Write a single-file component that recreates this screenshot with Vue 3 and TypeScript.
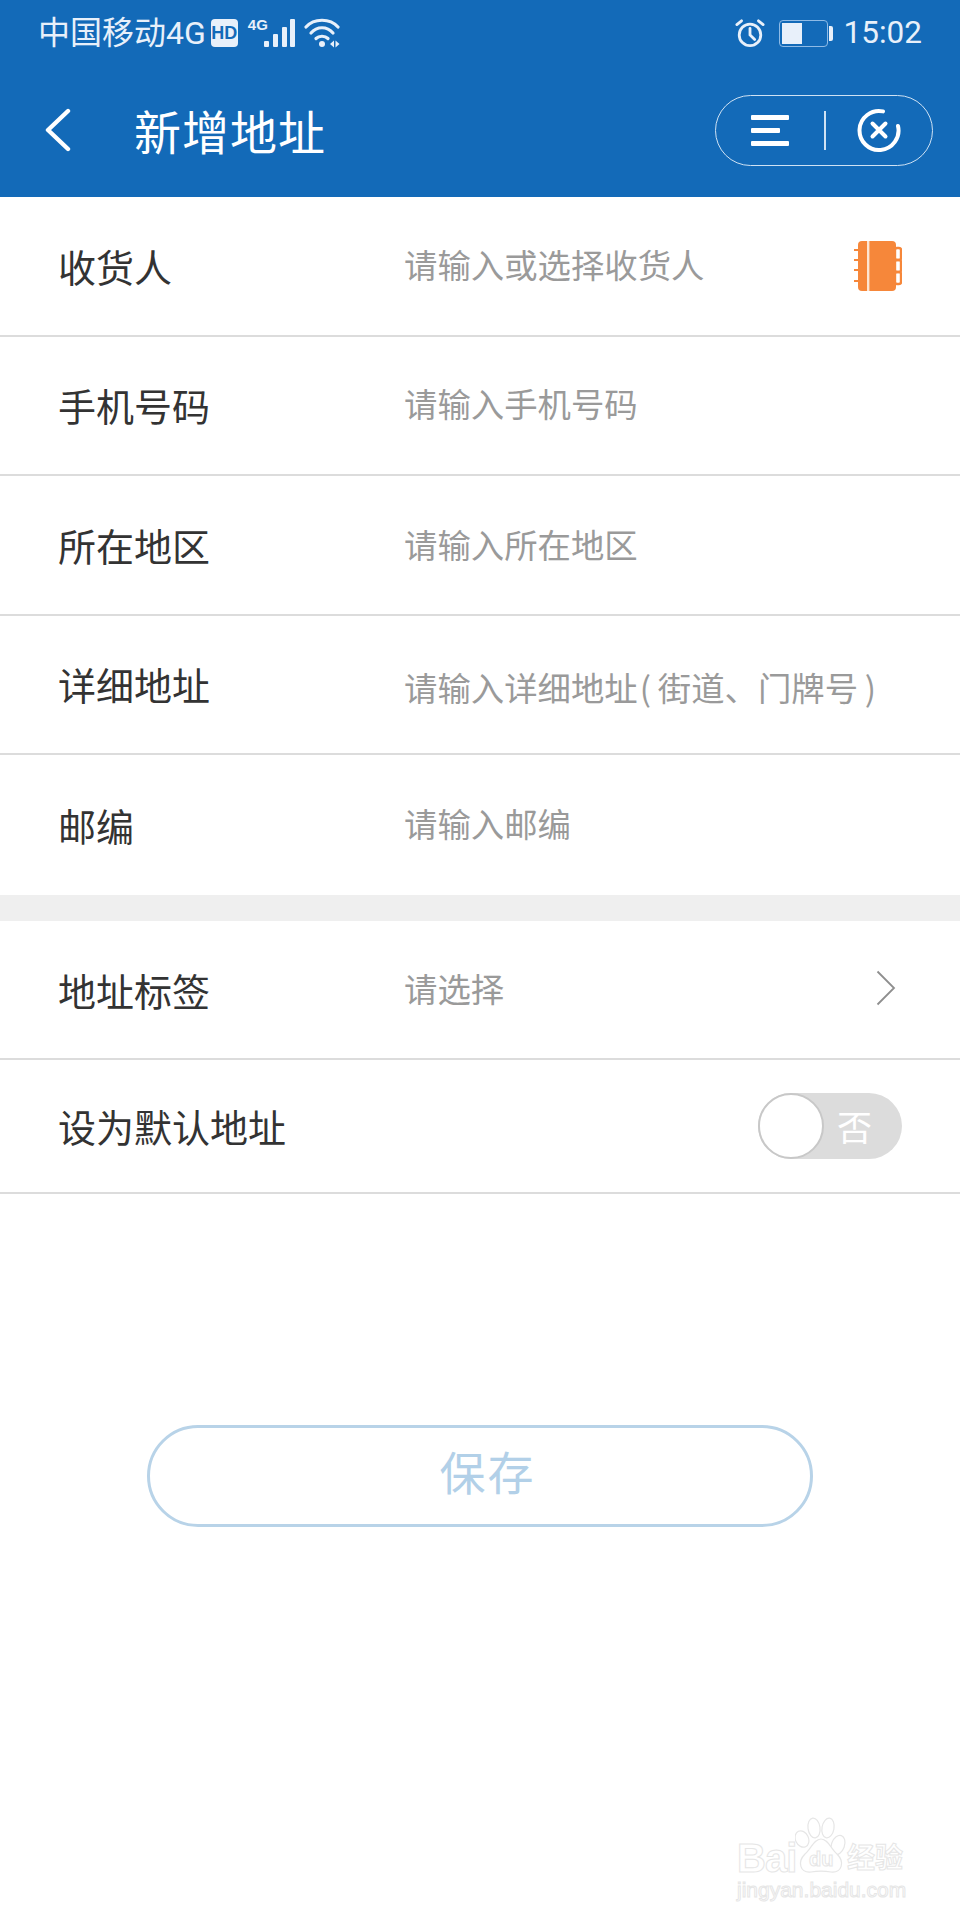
<script setup lang="ts">
interface Row { label: string; hint: string }
const group1: Row[] = [
  { label: '收货人', hint: '请输入或选择收货人' },
  { label: '手机号码', hint: '请输入手机号码' },
  { label: '所在地区', hint: '请输入所在地区' },
  { label: '详细地址', hint: '请输入详细地址\u200a(\u2009街道、门牌号\u2009)' },
  { label: '邮编', hint: '请输入邮编' },
]
</script>

<template>
  <div class="page">
    <header class="head">
      <div class="status">
        <div class="status-side">
          <span class="carrier">中国移动4G</span>
          <span class="hd">HD</span>
          <span class="sig">
            <span class="sig-4g">4G</span>
            <svg width="36" height="30" viewBox="0 0 36 30">
              <g fill="#e8f0fa">
                <rect x="4" y="23" width="5" height="6" rx="1" />
                <rect x="13" y="16" width="5" height="13" rx="1" />
                <rect x="22" y="9" width="5" height="20" rx="1" />
                <rect x="30" y="1" width="5" height="28" rx="1" />
              </g>
            </svg>
          </span>
          <svg class="wifi" width="36" height="30" viewBox="0 0 36 30" fill="none" stroke="#e8f0fa" stroke-width="3.2" stroke-linecap="round">
            <path d="M2 9C10 0 26 0 34 9" />
            <path d="M7 15C13 8 23 8 29 15" />
            <path d="M12 20.5C15 17.5 21 17.5 24 20.5" />
            <circle cx="18" cy="26" r="3" fill="#e8f0fa" stroke="none" />
            <path d="M26 26l4-3.5v7zM31.5 22.5l4 3.5-4 3.5z" fill="#e8f0fa" stroke="none" />
          </svg>
        </div>
        <div class="status-side">
          <svg class="alarm" width="30" height="30" viewBox="0 0 32 32" fill="none" stroke="#e8f0fa" stroke-width="3" stroke-linecap="round">
            <circle cx="16" cy="18" r="11.5" />
            <path d="M16 11v7l5 5" />
            <path d="M2 7l5-4M30 7l-5-4" />
          </svg>
          <span class="battery"><span class="level"></span></span>
          <span class="batt-tip"></span>
          <span class="time">15:02</span>
        </div>
      </div>
      <div class="nav">
        <svg class="back" width="28" height="44" viewBox="0 0 28 44" fill="none" stroke="#fff" stroke-width="4.4" stroke-linecap="round" stroke-linejoin="round">
          <path d="M24 3L4 22l20 19" />
        </svg>
        <h1 class="title">新增地址</h1>
        <div class="capsule">
          <svg width="40" height="32" viewBox="0 0 40 32" fill="#fff">
            <rect x="1" y="1" width="38" height="5" rx="1" />
            <rect x="1" y="14" width="29" height="5" rx="1" />
            <rect x="1" y="27" width="38" height="5" rx="1" />
          </svg>
          <span class="capsule-sep"></span>
          <svg width="44" height="44" viewBox="0 0 44 44" fill="none" stroke="#fff" stroke-width="4" stroke-linecap="round">
            <path d="M26 3.4A19.5 19.5 0 1 0 41 18" />
            <path d="M15.5 15.5l13 13M28.5 15.5l-13 13" />
          </svg>
        </div>
      </div>
    </header>

    <section class="group">
      <div v-for="(r, i) in group1" :key="r.label" class="row" :class="{ last: i === group1.length - 1 }">
        <span class="label">{{ r.label }}</span>
        <span class="hint" :class="{ low: i === 3, mid: i === 2 }">{{ r.hint }}</span>
        <svg v-if="i === 0" class="book" width="48" height="52" viewBox="0 0 48 52">
          <rect x="4" y="1" width="38" height="50" rx="4" fill="#f6873a" />
          <rect x="13" y="1" width="2.4" height="50" fill="#fde6d4" />
          <g fill="none" stroke="#f6873a" stroke-width="2.4">
            <rect x="41" y="8" width="6" height="12" rx="2" />
            <rect x="41" y="20" width="6" height="12" rx="2" />
            <rect x="41" y="32" width="6" height="12" rx="2" />
          </g>
          <g stroke="#f6873a" stroke-width="2">
            <path d="M0 10h4M0 20h4M0 30h4M0 41h4" />
          </g>
        </svg>
      </div>
    </section>

    <div class="band"></div>

    <section class="group">
      <div class="row tag-row">
        <span class="label">地址标签</span>
        <span class="hint">请选择</span>
        <svg class="chev" width="20" height="36" viewBox="0 0 20 36" fill="none" stroke="#8e8e8e" stroke-width="1.8">
          <path d="M1.5 1.5L18 18 1.5 34.5" />
        </svg>
      </div>
      <div class="row default-row">
        <span class="label">设为默认地址</span>
        <div class="toggle">
          <span class="knob"></span>
          <span class="toggle-text">否</span>
        </div>
      </div>
    </section>

    <div class="save-wrap">
      <button class="save" type="button">保存</button>
    </div>

    <div class="mark">
      <div class="mark-top">
        <span class="mark-bai">Bai</span>
        <span class="paw">
          <svg width="52" height="61" viewBox="0 0 52 61" fill="#fff" stroke="#e6e6e6" stroke-width="1.2">
            <ellipse cx="7" cy="22" rx="6.5" ry="8.5" transform="rotate(-25 7 22)" />
            <ellipse cx="19" cy="11" rx="6" ry="10" transform="rotate(-8 19 11)" />
            <ellipse cx="33" cy="11" rx="6" ry="10" transform="rotate(10 33 11)" />
            <ellipse cx="43" cy="28" rx="6.5" ry="10" transform="rotate(20 43 28)" />
            <path d="M26 22C33 22 36 32 42 37C50 45 47 56 36 55C30 54 22 54 16 55C5 56 2 45 10 37C16 32 19 22 26 22Z" />
          </svg>
          <span class="mark-du">du</span>
        </span>
        <span class="mark-cn">经验</span>
      </div>
      <div class="mark-url">jingyan.baidu.com</div>
    </div>
  </div>
</template>

<style>
html, body { margin: 0; background: #fff; }
</style>

<style scoped>
.page {
  position: relative;
  width: 960px;
  height: 1920px;
  background: #fff;
  overflow: hidden;
  font-family: "Noto Sans CJK SC", "Noto Sans", sans-serif;
}
.head { background: #136ab8; height: 197px; }
.status {
  display: flex;
  justify-content: space-between;
  align-items: center;
  height: 66px;
  padding: 0 38px 0 38px;
  color: #e8f0fa;
}
.status-side { display: flex; align-items: center; }
.carrier { font-size: 32px; line-height: 36px; font-family: Roboto, "Noto Sans CJK SC", sans-serif; }
.hd {
  margin-left: 5px;
  width: 27px;
  height: 28px;
  background: #e8f0fa;
  color: #136ab8;
  border-radius: 4px;
  font: 700 18px/28px "Liberation Sans", sans-serif;
  text-align: center;
}
.sig { position: relative; display: flex; margin-left: 10px; width: 48px; justify-content: flex-end; }
.sig-4g {
  position: absolute;
  left: 0;
  top: -2px;
  font: 700 15px/17px "Liberation Sans", sans-serif;
}
.wifi { margin-left: 8px; }
.alarm { margin-right: 14px; }
.battery {
  display: block;
  width: 43px;
  height: 21px;
  border: 1.5px solid #8fbbe6;
  border-radius: 4px;
  padding: 2px;
  box-sizing: content-box;
}
.level { display: block; width: 20px; height: 100%; background: #e8f0fa; }
.batt-tip { width: 4px; height: 15px; background: #e8f0fa; border-radius: 0 2px 2px 0; margin-left: 1px; }
.time { margin-left: 11px; font: 400 31.5px/36px Roboto, sans-serif; }
.nav {
  display: flex;
  align-items: center;
  height: 131px;
  padding: 0 27px 3px 44px;
  box-sizing: border-box;
}
.back { flex: none; }
.title {
  margin: 0 0 0 62px;
  flex: 1;
  font-size: 47px;
  font-weight: 400;
  line-height: 60px;
  letter-spacing: 1px;
  color: #fff;
}
.capsule {
  display: flex;
  align-items: center;
  width: 218px;
  height: 71px;
  box-sizing: border-box;
  border: 1.5px solid #cfe2f4;
  border-radius: 36px;
  padding-left: 34px;
}
.capsule-sep { width: 1.5px; height: 39px; background: #cfe2f4; margin: 0 31px 0 34px; }
.row {
  display: flex;
  align-items: center;
  height: 139.5px;
  padding: 0 58px;
  border-bottom: 2px solid #dcdcdc;
  box-sizing: border-box;
  position: relative;
}
.row.last { border-bottom: 0; height: 140px; }
.tag-row { height: 139px; }
.default-row { height: 134px; }
.label { width: 346px; flex: none; font-size: 38px; color: #333; line-height: 50px; }
.default-row .label { width: auto; flex: 1; }
.hint { flex: 1; font-size: 33.4px; color: #9a9a9a; line-height: 44px; white-space: nowrap; margin-top: -4px; }
.hint.low { margin-top: 6px; }
.hint.mid { margin-top: -2px; }
.book { flex: none; }
.chev { flex: none; margin: 0 6px 3px 0; }
.band { height: 26px; background: #efefef; }
.toggle {
  position: relative;
  display: flex;
  align-items: center;
  justify-content: flex-end;
  width: 144px;
  height: 66px;
  border-radius: 33px;
  background: #dcdcdc;
  padding-right: 30px;
  box-sizing: border-box;
}
.knob {
  position: absolute;
  left: 0;
  top: 0;
  width: 66px;
  height: 66px;
  box-sizing: border-box;
  border-radius: 50%;
  background: #fff;
  border: 2px solid #c8c8c8;
}
.toggle-text { font-size: 35px; color: #fff; line-height: 44px; }
.save-wrap { display: flex; justify-content: center; padding-top: 231px; }
.save {
  width: 666px;
  height: 102px;
  box-sizing: border-box;
  border: 3px solid #b8d3e8;
  border-radius: 51px;
  background: #fff;
  color: #b2d0e8;
  font-family: inherit;
  font-size: 46px;
  letter-spacing: 2px;
  padding: 0 0 12px 15px;
}
.mark {
  position: absolute;
  left: 737px;
  top: 1817px;
  width: 175px;
  color: transparent;
  -webkit-text-stroke: 1px #e6e6e6;
}
.mark-top { display: flex; align-items: flex-end; height: 61px; }
.mark-bai { font: 700 40px/40px "Liberation Sans", sans-serif; letter-spacing: -1px; width: 58px; flex: none; }
.paw { position: relative; display: block; width: 52px; height: 61px; flex: none; }
.paw svg { display: block; }
.mark-du {
  position: absolute;
  left: 14px;
  bottom: 7px;
  font: 700 20px/24px "Liberation Sans", sans-serif;
}
.mark-cn { font-size: 28px; line-height: 36px; font-weight: 700; margin-bottom: 4px; white-space: nowrap; }
.mark-url { font: 400 21px/24px "Liberation Sans", sans-serif; white-space: nowrap; }
</style>
